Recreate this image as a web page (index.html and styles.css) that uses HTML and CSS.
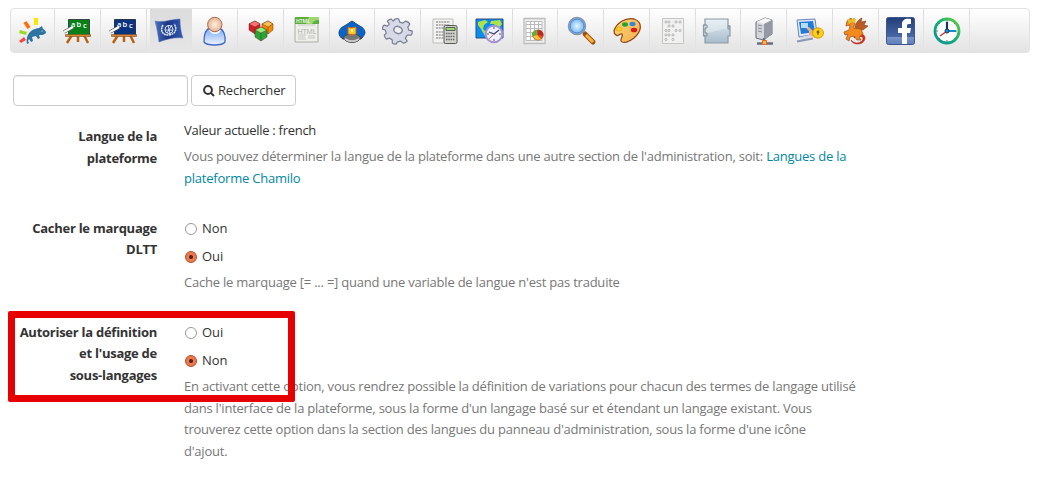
FILE: index.html
```html
<!DOCTYPE html>
<html lang="fr">
<head>
<meta charset="utf-8">
<title>Paramètres de langue</title>
<link rel="stylesheet" href="styles.css">
</head>
<body>
<svg width="0" height="0" class="defs" aria-hidden="true">
<defs>
<linearGradient id="flag" x2="1"><stop offset="0" stop-color="#4a73c4"/><stop offset=".45" stop-color="#1b3683"/><stop offset="1" stop-color="#3459b4"/></linearGradient>
<linearGradient id="user" x2="0" y2="1"><stop offset="0" stop-color="#79a7f3"/><stop offset="1" stop-color="#edf5ff"/></linearGradient>
<radialGradient id="skin"><stop offset="0" stop-color="#fff0dc"/><stop offset="1" stop-color="#e5b394"/></radialGradient>
<radialGradient id="lens"><stop offset="0" stop-color="#e2f8ff"/><stop offset="1" stop-color="#64aaf0"/></radialGradient>
<linearGradient id="plug" x2="0" y2="1"><stop offset="0" stop-color="#e2ebf2"/><stop offset="1" stop-color="#a9bccb"/></linearGradient>
<linearGradient id="fb" x2="0" y2="1"><stop offset="0" stop-color="#223e77"/><stop offset=".72" stop-color="#4868a6"/><stop offset=".74" stop-color="#7894c7"/><stop offset="1" stop-color="#5c7eb9"/></linearGradient>
<linearGradient id="ring" x1="1" y1="0" x2="0" y2="1"><stop offset="0" stop-color="#63d23c"/><stop offset=".5" stop-color="#10af77"/><stop offset="1" stop-color="#0a909c"/></linearGradient>
<linearGradient id="pal" x2="1" y2="1"><stop offset="0" stop-color="#ffd875"/><stop offset="1" stop-color="#f2ad4e"/></linearGradient>
</defs>
</svg>
<nav class="toolbar">
<a class="tab first"><svg viewBox="0 0 32 32"><path d="M7.500 8l3-2 4 6-3 2z" fill="#ff7000"/><path d="M18 3h4v7h-4z" fill="#ffe400"/><path d="M4 15l7 2-1 3-7-2z" fill="#9adb24"/><path d="M3 26l5-4 2 3-5 3z" fill="#f84646"/><path d="M11 29c-1-4 0-9 3-12 3-3 7-4 9-4l3-2 1 3c2 1 3 2 3 4l-3 2-4 0 1 3-2 1-2-3-4 1 1 4-2 1-2-3-1 2 1 2z" fill="#2d75a0"/><circle cx="26" cy="16" r=".6" fill="#fff"/></svg></a>
<a class="tab"><svg viewBox="0 0 32 32"><path d="M10 20L5 28M22 20l4 8M16 20v7" stroke="#b86213" stroke-width="2.500"/><path d="M6.500 4.500h21v16h-21z" fill="#078018" stroke="#374943"/><path d="M3.500 19.500h25v2h-25z" fill="#d88939" stroke="#7c4a1b" stroke-width=".6"/><path d="M2 17l9-5" stroke="#555" stroke-width="3.500"/><path d="M2 17l9-5" stroke="#fff" stroke-width="2.200"/><text x="9" y="12">a</text><text x="14.500" y="12">b</text><text x="21" y="13">c</text></svg></a>
<a class="tab"><svg viewBox="0 0 32 32"><path d="M10 20L5 28M22 20l4 8M16 20v7" stroke="#b86213" stroke-width="2.500"/><path d="M6.500 4.500h21v16h-21z" fill="#0c347e" stroke="#29374a"/><path d="M3.500 19.500h25v2h-25z" fill="#d88939" stroke="#7c4a1b" stroke-width=".6"/><path d="M2 17l9-5" stroke="#555" stroke-width="3.500"/><path d="M2 17l9-5" stroke="#fff" stroke-width="2.200"/><text x="9" y="12">a</text><text x="14.500" y="12">b</text><text x="21" y="13">c</text></svg></a>
<a class="tab active"><svg viewBox="0 0 32 32"><path d="M2 6c9 2 16-2 25-2 0 7 1 14 3 19-8-1-16 1-24 4C5 20 4 13 2 6z" fill="url(#flag)" stroke="#5271b5" stroke-width=".5"/><g fill="none" stroke="#e1e9f7"><ellipse cx="16" cy="14.500" rx="4" ry="4"/><path d="M12 15h8M15 10l2 9M19 10l-5 8" stroke-width=".9"/><path d="M10 10c-3 5-1 10 5 10 7 0 10-6 6-11" stroke-width="1.500" stroke-dasharray="2 .5"/></g></svg></a>
<a class="tab"><svg viewBox="0 0 32 32"><path d="M5 27c0-8 2-13 6-14h9c4 1 7 7 6 14-3 4-18 4-21 0z" fill="url(#user)" stroke="#4268c4" stroke-width="1.300"/><path d="M11 15c2 4 8 4 10 0" stroke="#edf5ff" stroke-width="2" fill="none"/><circle cx="15.800" cy="9.500" r="7.200" fill="url(#skin)" stroke="#ad694d"/></svg></a>
<a class="tab"><svg viewBox="0 0 32 32"><g stroke="#693223" stroke-width=".5"><path d="M4 9l6-3 5 3v6l-5 4-6-4z" fill="#d51c29"/><path d="M4 9l6-3 5 3-5 3z" fill="#ff7476"/><path d="M17 9l6-3 5 3v6l-5 4-6-4z" fill="#f48b00"/><path d="M17 9l6-3 5 3-5 3z" fill="#ffc14d"/><path d="M10 15l6-3 6 3v7l-6 4-6-4z" fill="#25a737"/><path d="M10 15l6-3 6 3-6 3z" fill="#94ef7b"/><path d="M10 12v7M23 12v7M16 18v8" fill="none"/></g></svg></a>
<a class="tab"><svg viewBox="0 0 32 32"><path d="M4 3h23v24H4z" fill="#eeeeea" stroke="#a9ada4"/><path d="M4 2h24v7H4z" fill="#5cae3a"/><path d="M18 2h10v3c-4 0-6 2-7 4h-6z" fill="#9dd675"/><text x="5" y="8" class="html-small">HTML</text><text x="6.500" y="18.500" class="html-big">HTML</text><path d="M7 10h17M7 20h8M7 22h7M7 24h8M17 21h7M17 23h7" stroke="#c6c6c2"/></svg></a>
<a class="tab"><svg viewBox="0 0 32 32"><path d="M3 18c0-4 3-6 7-8l6-4 6 4c4 2 7 4 7 8-1 3-3 5-4 6H7c-2-1-4-3-4-6z" fill="#0763cd" stroke="#294768"/><path d="M7 23c4-6 14-6 18 0-4 6-14 6-18 0z" fill="#777" stroke="#424952"/><path d="M9 24c4 3 10 3 14 0" stroke="#ccc" stroke-width="2" fill="none"/><path d="M12 12l3 1 5-1v7c-2 1-5 1-8 0z" fill="#ffcb24" stroke="#cf6613"/><path d="M15 14h2v3h-2z" fill="#fff3a0"/></svg></a>
<a class="tab"><svg viewBox="0 0 32 32"><path transform="translate(.8 .6)" d="M12 3.500q3-1 4 0l1 3 3 1 3-2q3 1 4 3l-2 3 1 3 3.500 1q0 3-1 4l-4 0-2 3 2 3q-2 2-4 2l-3-2-3 1-1 2q-3 0-4-1l0-3-3-2-3 1q-2-2-2-4l2-2-1-3-3-1q0-3 2-4l3 1 2-2-2-3q2-2 4-2l2 2z" fill="#d7d9e7" stroke="#7c7e93" stroke-width="1.200" stroke-linejoin="round"/><ellipse cx="16" cy="15" rx="4.300" ry="3.500" transform="rotate(18 16 15)" fill="#f0f0f2" stroke="#868a9f" stroke-width="1.600"/></svg></a>
<a class="tab"><svg viewBox="0 0 32 32"><path d="M5 4h20v24H5z" fill="#f2f2f0" stroke="#bdbdba"/><path d="M8 7h14M8 10h14M8 13h10M8 17h7M8 20h7M8 23h7" stroke="#b2b2b2" stroke-width="2" stroke-dasharray="2 .7"/><rect x="16" y="10.500" width="13" height="18" rx="1.500" fill="#d2d3ce" stroke="#555955"/><path d="M18 12.500h9v3h-9z" fill="#a7d27a" stroke="#4e684f"/><path d="M18 18.500h9M18 21.500h9M18 24.500h9" stroke="#666" stroke-width="1.500" stroke-dasharray="1.500 .8"/></svg></a>
<a class="tab"><svg viewBox="0 0 32 32"><path d="M2 4h27v19H2z" fill="#098df0" stroke="#344d76"/><path d="M4 7l7-2 3 2-4 3-1 4 4 4-2 3-4-7-3-4zM17 6l9-1 2 4-4 5-4-5h-4z" fill="#afe24a"/><circle cx="20" cy="19" r="8.300" fill="#eff0ff" stroke="#a491d3" stroke-width="2"/><path d="M20 12v2m0 10v2m-7-7h2m10 0h2" stroke="#555"/><path d="M15 17l5 2 5-4" fill="none" stroke="#344463" stroke-width="1.200"/><path d="M20 19l-5 5" stroke="#df6756"/></svg></a>
<a class="tab"><svg viewBox="0 0 32 32"><path d="M5 3.500h21v25H5z" fill="#eee" stroke="#bdbdbd" stroke-width="1.300"/><path d="M7 6.500h16v19H7z" fill="#fff" stroke="#bbb"/><path d="M7 9.500h16M7 13.500h16M7 17.500h16M7 21.500h16M11.500 7v19M15.500 7v19M19.500 7v19" stroke="#bbb"/><ellipse cx="19" cy="20" rx="5.300" ry="5" fill="#e75222" stroke="#8b4d24" stroke-width=".6"/><path d="M18 15v5l-5 1c-1-3 2-6 5-6z" fill="#5cae39"/><path d="M18 20l4 4c-3 2-7 0-8-3z" fill="#ffc232"/><path d="M19 15c4 0 6 3 5 6l-5-1z" fill="#bb2a21"/></svg></a>
<a class="tab"><svg viewBox="0 0 32 32"><path d="M20 19l8 8" stroke="#9b531a" stroke-width="5" stroke-linecap="round"/><path d="M21 20l7 7" stroke="#ffb438" stroke-width="3"/><circle cx="12" cy="11" r="8.500" fill="url(#lens)" stroke="#8c96ad" stroke-width="1.500"/><circle cx="12" cy="11" r="7" fill="none" stroke="#5087cc"/></svg></a>
<a class="tab"><svg viewBox="0 0 32 32"><path d="M3 16C5 8 15 2 23 4c9 3 8 12 0 19-5 4-11 6-13 3-1-3 3-5 1-7-2-1-4 3-6 1-2-1-2-3-2-4z" fill="url(#pal)" stroke="#974918" stroke-width="1.300"/><ellipse cx="8" cy="14" rx="3" ry="2" fill="#ffcf1d" stroke="#c89022" stroke-width=".5"/><ellipse cx="14" cy="9.500" rx="3" ry="2.200" fill="#25a52d"/><ellipse cx="21.500" cy="9" rx="3" ry="2.200" fill="#3b83d8"/><ellipse cx="23" cy="15" rx="3.200" ry="2.300" fill="#d81914"/></svg></a>
<a class="tab"><svg viewBox="0 0 32 32"><path d="M5.500 3.500h21v25h-21z" fill="#f1f1f0" stroke="#c5c5c3"/><g fill="#eee" stroke="#aaa" stroke-width=".8"><circle cx="9" cy="7" r="1.100"/><circle cx="12" cy="7" r="1.100"/><circle cx="19" cy="7" r="1.100"/><circle cx="23" cy="7" r="1.100"/><circle cx="12" cy="11" r="1.100"/><circle cx="16" cy="11" r="1.100"/><circle cx="9" cy="15.500" r="1.100"/><circle cx="12" cy="15.500" r="1.100"/><circle cx="19" cy="15.500" r="1.100"/><circle cx="23" cy="15.500" r="1.100"/><circle cx="9" cy="20" r="1.100"/><circle cx="12" cy="20" r="1.100"/><circle cx="16" cy="20" r="1.100"/><circle cx="9" cy="24.500" r="1.100"/><circle cx="16" cy="24.500" r="1.100"/></g></svg></a>
<a class="tab"><svg viewBox="0 0 32 32"><path d="M3 4h23v7h2v10h-2v7H3v-7H1.500V10H3z" fill="url(#plug)" stroke="#8d9ba5" stroke-width="1.200"/><path d="M4 5h21v9c-9 0-14 4-21 4z" fill="#eff4f8" opacity=".45"/><path d="M1.500 10H5v3H3v5h2v3H2M28 11h-2v3h2" stroke="#7f8e99" fill="none"/></svg></a>
<a class="tab"><svg viewBox="0 0 32 32"><path d="M8 7l9-4 7 2v14l-9 6-7-2z" fill="#d5d6dc" stroke="#686c78"/><path d="M8 7l8 2 8-4-7-2z" fill="#f6f6f8"/><path d="M16 9l8-4v14l-8 6z" fill="#9599a5"/><path d="M10 10l4 1m-4 2l4 1m-4 2l4 1" stroke="#888b96"/><path d="M9 28.500h16M16 23v5" stroke="#666e82" stroke-width="2.500"/><path d="M14.500 25.500h4v4h-4z" fill="#ffb14e" stroke="#e26c1b"/></svg></a>
<a class="tab"><svg viewBox="0 0 32 32"><path d="M3 5l18-1 2 15-18 3z" fill="#e0e9fb" stroke="#6b83b7"/><path d="M5 7l14-1 2 11-14 2z" fill="#237bd8"/><path d="M7 8h7v5H7z" fill="#b1ddff"/><path d="M12 13l3 3v4l6 3v-5l-6-6z" fill="#efb181"/><path d="M7 22l9-2 3 2-2 3H6z" fill="#d7dbe7"/><path d="M3 26.500l16-3" stroke="#8d98b4" stroke-width="2"/><ellipse cx="24" cy="18" rx="5.500" ry="5.200" fill="#ffd013" stroke="#df9c11"/><circle cx="24" cy="17" r="1.400" fill="#7c5509"/><path d="M24 17v3" stroke="#7c5509"/></svg></a>
<a class="tab"><svg viewBox="0 0 32 32"><path d="M14 19c11-3 14 5 8 9-4 2-10 1-11-3 4 5 11 3 12-1 0-3-4-3-9-1z" fill="#dd2817" stroke="#98251a" stroke-width=".5"/><path d="M15 13c0-5 4-9 7-10l-1 4 5-1-2 4 4 1-5 4z" fill="#b95b23" stroke="#7d421d" stroke-width=".6"/><path d="M7 6l4-3 1 2 2-2 1 6-2 4 8 1 2 5-4 3 2 3h-4l-3-4-4 1-1 4-3-2 2-5-3 1-1-3 5-2 1-5-4 1z" fill="#f48a1c" stroke="#9c4c18" stroke-width=".7"/><path d="M7 4l4 1 2-2 3 1-1 4-3-1-3 2z" fill="#e2c22e"/></svg></a>
<a class="tab"><svg viewBox="0 0 32 32"><rect x="1.500" y="2.500" width="28" height="27" rx="2" fill="url(#fb)" stroke="#3c568c"/><path d="M17 29V18h-4v-5h4V9c0-4 3-6 9-5v5c-3 0-4 0-4 2v2h4l-1 5h-3v11z" fill="#fff"/></svg></a>
<a class="tab"><svg viewBox="0 0 32 32"><circle cx="16" cy="16" r="12" fill="#fff" stroke="url(#ring)" stroke-width="2.800"/><path d="M16 5v2m0 18v2M5 16h2m18 0h1M8 8l1 1m15-1l-1 1M8 24l1-1m15 1l-1-1" stroke="#777"/><path d="M16 16L9 21" stroke="#d33232" stroke-width="1.500"/><path d="M16 16h9" stroke="#178bd0" stroke-width="2.200"/><path d="M16 7v9" stroke="#173758" stroke-width="2.200"/><circle cx="16" cy="16" r="2" fill="#248acb" stroke="#173758"/></svg></a>
</nav>
<main>
<form class="search"><input type="text" aria-label="Rechercher"><button type="button"><svg viewBox="0 0 12 12"><circle cx="5" cy="5" r="3.900"/><path d="M8 8l3 3"/></svg>Rechercher</button></form>
<section class="row platform"><div class="label">Langue de la<br>plateforme</div><div class="controls"><p class="value">Valeur actuelle : french</p><p class="help">Vous pouvez déterminer la langue de la plateforme dans une autre section de l'administration, soit: <a>Langues de la<br>plateforme Chamilo</a></p></div></section>
<section class="row dltt"><div class="label">Cacher le marquage<br>DLTT</div><div class="controls"><label class="option"><span class="radio"></span>Non</label><label class="option"><span class="radio checked"></span>Oui</label><p class="help">Cache le marquage [= ... =] quand une variable de langue n'est pas traduite</p></div></section>
<section class="row sub"><div class="label">Autoriser la définition<br>et l'usage de<br>sous-langages</div><div class="controls"><label class="option"><span class="radio"></span>Oui</label><label class="option"><span class="radio checked"></span>Non</label><p class="help">En activant cette option, vous rendrez possible la définition de variations pour chacun des termes de langage utilisé<br>dans l'interface de la plateforme, sous la forme d'un langage basé sur et étendant un langage existant. Vous<br>trouverez cette option dans la section des langues du panneau d'administration, sous la forme d'une icône<br>d'ajout.</p></div><span class="highlight"></span></section>
</main>
</body>
</html>
```
FILE: styles.css
```css
* { box-sizing: border-box; }
body { margin: 0; height: 482px; overflow: hidden; background: #fff; color: #333; font: 13px/21.6px "Open Sans", sans-serif; }
.defs { position: absolute; }
p { margin: 0; }
.toolbar { display: flex; width: 1020px; height: 45px; margin: 8px 0 0 10px; border: 1px solid #e2e2e2; border-radius: 4px; background: linear-gradient(#fff, #e3e3e3); overflow: hidden; }
.tab { display: flex; flex: 0 0 45.75px; justify-content: flex-end; padding: 6px 6px 0 0; border-right: 1px solid; border-image: linear-gradient(#ddd, #e5e5e5) 1; }
.tab.first { flex-basis: 44px; }
.tab.active { background: linear-gradient(#dcdcdc, #e6e6e6) 3px 0 no-repeat; }
.tab svg { flex: none; width: 32px; height: 32px; fill: none; }
.tab text { fill: #fff; font: 600 7.5px "Open Sans", sans-serif; }
.tab .html-small { font-size: 5px; }
.tab .html-big { fill: #aaa; font-size: 7px; font-weight: normal; }
.search { display: flex; gap: 3px; margin: 22px 0 0 13px; }
.search input { width: 175px; height: 31px; padding: 4px; border: 1px solid #ccc; border-radius: 4px; box-shadow: inset 0 1px 1px rgba(0, 0, 0, .08); }
.search button { display: flex; align-items: center; gap: 3px; width: 105px; height: 31px; padding: 0 0 0 11px; border: 1px solid #ccc; border-radius: 4px; background: #fff; color: #333; font: inherit; letter-spacing: -.15px; }
.search svg { width: 12px; height: 12px; fill: none; stroke: #333; stroke-width: 2; }
.row { display: flex; position: relative; }
.label { flex: none; width: 157px; font-weight: bold; line-height: 21.4px; letter-spacing: -.26px; text-align: right; }
.controls { padding-left: 27px; white-space: nowrap; }
.value { letter-spacing: -.28px; }
.help { color: #777; letter-spacing: -.22px; }
.help a { color: #0088a0; }
.platform { height: 98px; margin-top: 14px; }
.platform .label { padding-top: 6px; line-height: 21.6px; }
.platform .help { margin-top: 4.400px; }
.dltt { height: 104px; }
.option { display: flex; align-items: center; gap: 5px; height: 22px; margin-bottom: 6px; }
.option + .help { margin-top: -2px; }
.radio { width: 12px; height: 12px; margin: -1px 0 0 1px; border: 1px solid #999; border-radius: 50%; background: #fff; }
.radio.checked { border-color: #b74927; background: radial-gradient(circle, #542a20 0 1.6px, #f37b51 2.5px 3.5px, #df673d 4px, #f48a63 5px); }
.highlight { position: absolute; left: 8px; top: -11px; width: 287px; height: 91px; border: 7px solid #e60000; border-radius: 2px; }
```
